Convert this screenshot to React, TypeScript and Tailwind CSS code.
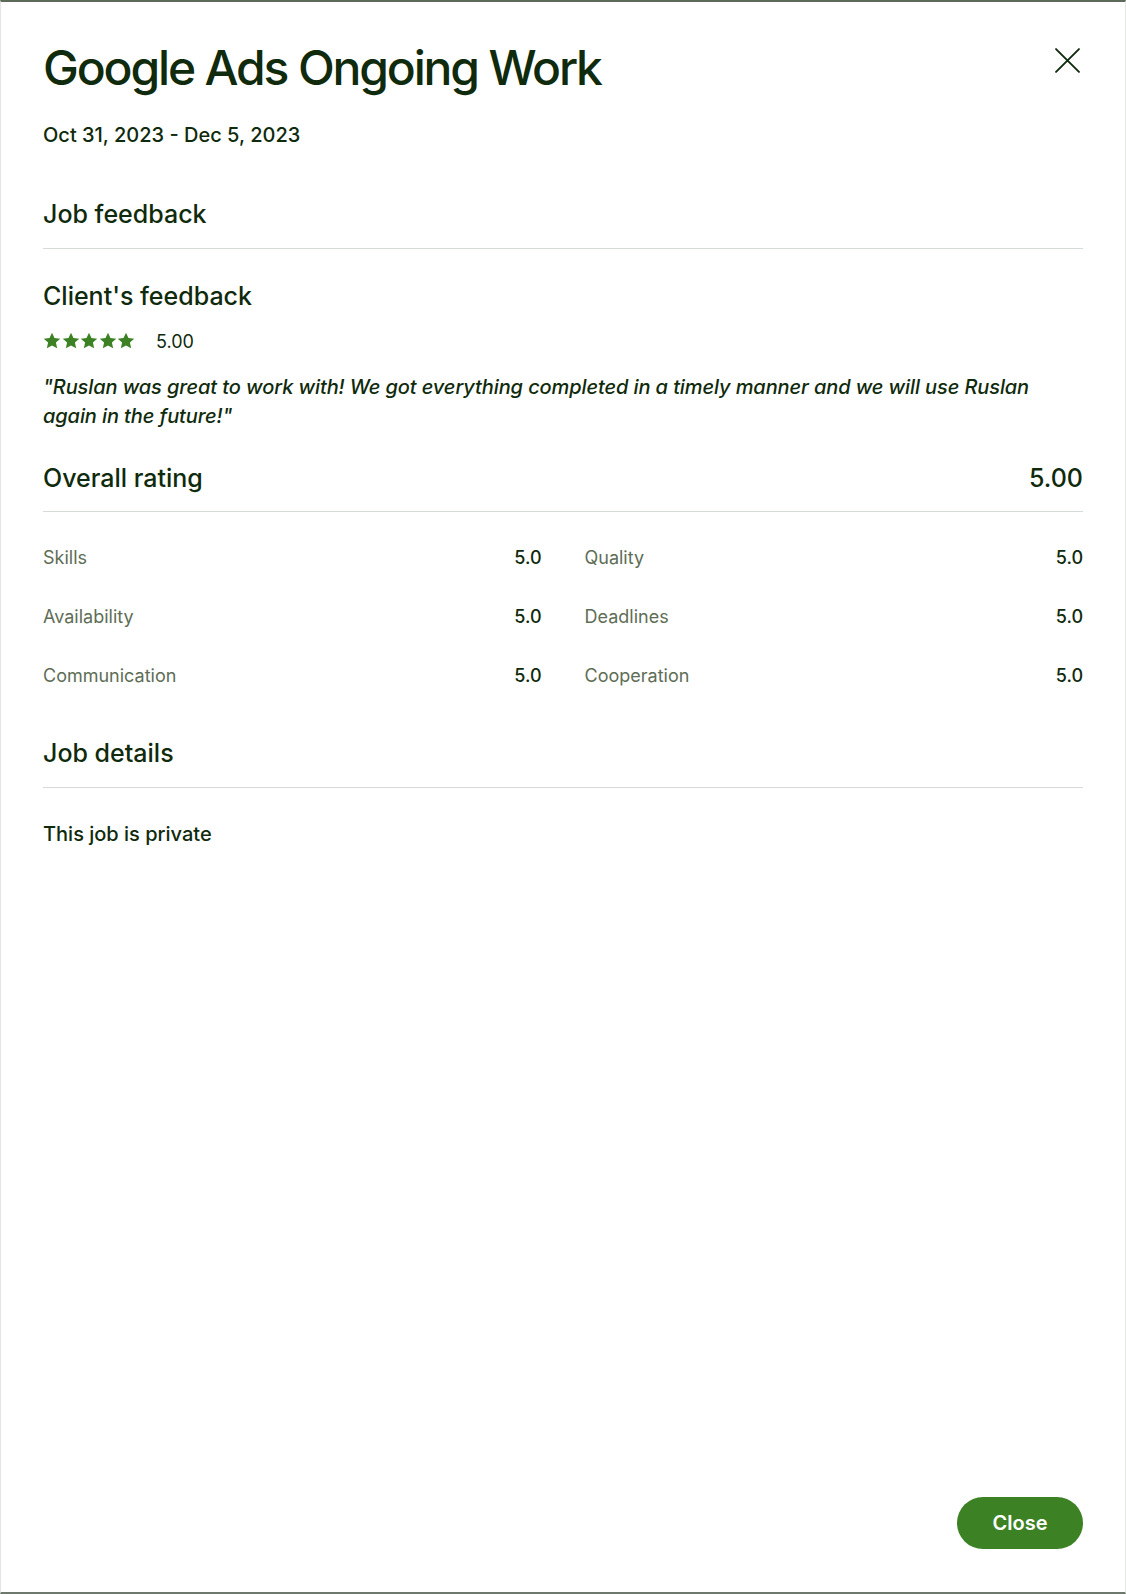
import React from 'react';

const ratings: [string, string][] = [
  ['Skills', '5.0'],
  ['Quality', '5.0'],
  ['Availability', '5.0'],
  ['Deadlines', '5.0'],
  ['Communication', '5.0'],
  ['Cooperation', '5.0'],
];

function Star() {
  return (
    <svg viewBox="0 0 24 24" className="w-[18px] h-[18px]" fill="#3c8224">
      <path d="M12 1l3.3 7.1 7.7.8-5.8 5.2 1.7 7.7L12 17.9l-6.9 3.9 1.7-7.7L1 8.9l7.7-.8z" />
    </svg>
  );
}

export default function App() {
  return (
    <div
      className="min-h-[1594px] flex flex-col bg-white border-t-2 border-b-2 border-t-[#5d6a5a] border-b-[#6f786c] border-x border-x-[#e4e6e4] px-[42px] text-[#0f2a0c]"
      style={{ fontFamily: 'Inter, "Liberation Sans", sans-serif' }}
    >
      <div className="flex items-start justify-between pt-[38px]">
        <h1 className="text-[48px] leading-[56px] font-medium tracking-[-0.045em]">Google Ads Ongoing Work</h1>
        <button className="mt-[8px] mr-[3px] text-[#0f2a0c]" aria-label="Close">
          <svg viewBox="0 0 24 24" className="w-[25px] h-[25px]" stroke="currentColor" strokeWidth="1.8" fill="none" strokeLinecap="round">
            <path d="M1 1L23 23M23 1L1 23" />
          </svg>
        </button>
      </div>

      <p className="mt-[25px] text-[20px] leading-[28px] font-medium">Oct 31, 2023 - Dec 5, 2023</p>

      <h2 className="mt-[49px] text-[25px] leading-[32px] font-medium">Job feedback</h2>
      <div className="mt-[18px] border-t border-[#d5dcd5]" />

      <h3 className="mt-[31px] text-[25px] leading-[32px] font-medium">Client's feedback</h3>
      <div className="mt-[17px] flex items-center h-[24px]">
        <div className="flex gap-[0.5px]">
          <Star />
          <Star />
          <Star />
          <Star />
          <Star />
        </div>
        <span className="ml-[21px] text-[18px]">5.00</span>
      </div>
      <p className="mt-[20px] text-[20px] leading-[29px] italic font-medium tracking-[-0.005em] pr-[40px]">
        "Ruslan was great to work with! We got everything completed in a timely manner and we will use Ruslan again in the future!"
      </p>

      <div className="mt-[31px] flex items-center justify-between">
        <h2 className="text-[25px] leading-[32px] font-medium">Overall rating</h2>
        <span className="text-[25px] leading-[32px] font-medium">5.00</span>
      </div>
      <div className="mt-[17px] border-t border-[#d5dcd5]" />

      <div className="mt-[33px] grid grid-cols-2 gap-x-[43px] gap-y-[35px]">
        {ratings.map(([label, value]) => (
          <div key={label} className="flex items-center justify-between h-[24px] text-[18px]">
            <span className="text-[#5e6d55]">{label}</span>
            <span className="font-medium">{value}</span>
          </div>
        ))}
      </div>

      <h2 className="mt-[50px] text-[25px] leading-[32px] font-medium">Job details</h2>
      <div className="mt-[18px] border-t border-[#d5dcd5]" />
      <p className="mt-[34px] text-[20px] leading-[24px] font-medium">This job is private</p>

      <div className="flex-1" />
      <div className="flex justify-end pb-[43px]">
        <button className="h-[52px] w-[126px] rounded-full bg-[#3c8224] text-white text-[20px] font-semibold">Close</button>
      </div>
    </div>
  );
}
